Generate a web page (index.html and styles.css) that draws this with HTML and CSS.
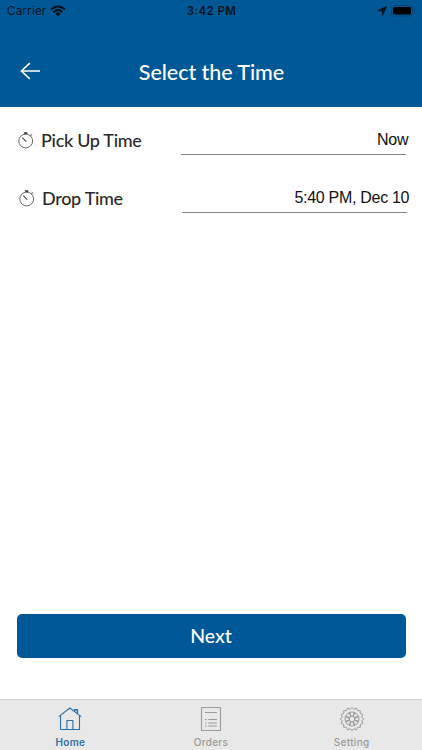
FILE: index.html
```html
<!DOCTYPE html>
<html lang="en">
<head>
<meta charset="utf-8">
<meta name="viewport" content="width=device-width, initial-scale=1">
<title>Select the Time</title>
<link rel="stylesheet" href="styles.css">
</head>
<body>
<div class="screen">
  <header class="header">
    <div class="status">
      <div class="status-left"><span class="carrier">Carrier</span>
        <svg class="wifi" viewBox="0 0 16 12"><path d="M1 4.6Q8-1.8 15 4.6M3.4 7.1Q8 3 12.6 7.1" fill="none" stroke="currentColor" stroke-width="2.1"/><path d="M5.3 8.6Q8 6.4 10.7 8.6L8 11.4Z" fill="currentColor"/></svg>
      </div>
      <span class="clock">3:42 PM</span>
      <div class="status-right">
        <svg class="location" viewBox="0 0 10 10"><path d="M9.8.2 5.6 9.8 5 5.2.2 4.6Z" fill="currentColor" stroke="currentColor" stroke-width=".5"/></svg>
        <svg class="battery" viewBox="0 0 25 12"><rect x=".5" y=".5" width="21" height="10.6" rx="3" fill="none" stroke="#00447a"/><rect x="2" y="2" width="18" height="7.6" rx="1.6" fill="#000"/><path d="M23 4v3.6q1.2-.5 1.2-1.8T23 4" fill="#00447a"/></svg>
      </div>
    </div>
    <div class="navbar">
      <svg class="back" viewBox="0 0 21 18"><path d="M9.8 1.2 1.5 9l8.3 7.8M1.5 9H20" fill="none" stroke="#fff" stroke-width="1.6"/></svg>
      <h1 class="title">Select the Time</h1>
    </div>
  </header>
  <main class="main">
    <div class="field">
      <svg class="stopwatch" viewBox="0 0 16 17"><circle cx="7.7" cy="9" r="6.9"/><path d="M7.7 2.3V1M5.9 1h3.6M12.2 4l1.2-1.2M12.7 2.1l1.5 1.4"/><path class="hand" d="M4.3 5.6l4 4"/><path class="crown" d="M6.2 1.2h3"/></svg>
      <span class="label">Pick Up Time</span>
      <span class="value"><span class="reading">Now</span></span>
    </div>
    <div class="field drop-field">
      <svg class="stopwatch" viewBox="0 0 16 17"><circle cx="7.7" cy="9" r="6.9"/><path d="M7.7 2.3V1M5.9 1h3.6M12.2 4l1.2-1.2M12.7 2.1l1.5 1.4"/><path class="hand" d="M4.3 5.6l4 4"/><path class="crown" d="M6.2 1.2h3"/></svg>
      <span class="label">Drop Time</span>
      <span class="value"><span class="reading">5:40 PM, Dec 10</span></span>
    </div>
  </main>
  <button class="next">Next</button>
  <nav class="tabs">
    <a class="tab active">
      <svg class="tab-icon" viewBox="0 0 26 26"><path d="M1.8 10.6 12.8 2 24.2 10.6M3.5 9.8V23.5h19V9.8M9.9 23.5v-9h6v9"/><path d="M17.6 5V3.8h2.8v3.8" stroke-width="1.5"/></svg>
      <span>Home</span>
    </a>
    <a class="tab">
      <svg class="tab-icon" viewBox="0 0 26 26"><path d="M3.5 1.5h19v23h-19ZM7 6.5h12"/><path d="M10.3 13.5h8.5M10.3 17h8.5M10.3 20h8.5M7 13.5h1.6M7 17h1.6M7 20h1.6"/></svg>
      <span>Orders</span>
    </a>
    <a class="tab">
      <svg class="tab-icon gear" viewBox="0 0 26 26"><path d="M24.8 13 22.6 14.9 23.9 17.5 21.2 18.5 21.3 21.3 18.5 21.2 17.5 23.9 14.9 22.6 13 24.8 11.1 22.6 8.5 23.9 7.5 21.2 4.7 21.3 4.8 18.5 2.1 17.5 3.4 14.9 1.2 13 3.4 11.1 2.1 8.5 4.8 7.5 4.7 4.7 7.5 4.8 8.5 2.1 11.1 3.4 13 1.2 14.9 3.4 17.5 2.1 18.5 4.8 21.3 4.7 21.2 7.5 23.9 8.5 22.6 11.1Z"/><circle cx="13" cy="13" r="7"/><circle cx="13" cy="13" r="2.8"/><path d="M15.6 14.1l3.9 1.6M14.1 15.6l1.6 3.9M11.9 15.6l-1.6 3.9M10.4 14.1l-3.9 1.6M10.4 11.9l-3.9-1.6M11.9 10.4l-1.6-3.9M14.1 10.4l1.6-3.9M15.6 11.9l3.9-1.6" stroke-width="1.6"/></svg>
      <span>Setting</span>
    </a>
  </nav>
</div>
</body>
</html>
```

FILE: styles.css
```css
* { box-sizing: border-box; }
body { margin: 0; background: #fff; }
.screen { width: 422px; height: 750px; display: flex; flex-direction: column; overflow: hidden; font-family: "Liberation Sans", sans-serif; }
.header { height: 107px; background: #005996; flex: none; }
.status { height: 22px; display: grid; grid-template-columns: 1fr auto 1fr; align-items: center; padding: 0 6px 0 7px; font: 500 11.5px/22px Inter, sans-serif; color: #06131f; }
.status-left, .status-right { display: flex; align-items: center; }
.carrier { font-weight: 400; letter-spacing: .25px; }
.wifi { width: 16px; height: 12px; margin-left: 4px; }
.clock { font-weight: 600; letter-spacing: .4px; }
.status-right { justify-content: flex-end; gap: 4px; }
.location { width: 10px; height: 10px; }
.battery { width: 25px; height: 12px; }
.navbar { height: 85px; display: grid; grid-template-columns: 50px 1fr 50px; align-items: center; padding-top: 15px; }
.back { width: 21px; height: 18px; margin: -2px 0 0 20px; }
.title { margin: 0; padding-left: 1px; text-align: center; font: 500 21.5px/30px Lato, sans-serif; letter-spacing: -.05px; color: #fff; }
.main { flex: 1; padding: 19px 15px 0 18px; }
.field { height: 29px; margin-bottom: 29px; display: grid; grid-template-columns: 16px 146.5px 225px; align-items: start; }
.drop-field { transform: translateX(1px); }
.stopwatch { width: 16px; height: 17px; margin-top: 5.6px; fill: none; stroke: #444; stroke-width: .8; }
.hand { stroke-width: 1.1; }
.crown { stroke-width: 1.8; }
.label { padding-left: 7px; font: 500 18px/29px Lato, sans-serif; letter-spacing: -.3px; color: #292929; white-space: nowrap; }
.value { height: 29px; display: flex; justify-content: flex-end; border-bottom: 1px solid #858585; font-size: 16px; letter-spacing: -.3px; line-height: 28px; color: #111; white-space: nowrap; }
.reading { margin-right: -2.7px; }
.next { flex: none; width: 389px; height: 44px; margin: 0 0 41px 16.5px; padding: 0; border: 0; border-radius: 5px; background: #005996; color: #fff; font: 500 19.5px/44px Lato, sans-serif; letter-spacing: -.1px; }
.tabs { flex: none; height: 51px; display: grid; grid-template-columns: repeat(3, 1fr); border-top: 1px solid #d0d0d0; background: #e8e8e8; }
.tab { display: flex; flex-direction: column; align-items: center; padding-top: 6px; color: #9b9b9b; font: 500 10px/18px Inter, sans-serif; }
.tab-icon { width: 26px; height: 26px; fill: none; stroke: currentColor; stroke-width: 1.1; stroke-linejoin: round; }
.gear { stroke-width: 1; }
.tab.active { color: #2b70a8; font-weight: 600; }
.tab span { margin-top: 1px; letter-spacing: .3px; }
```
